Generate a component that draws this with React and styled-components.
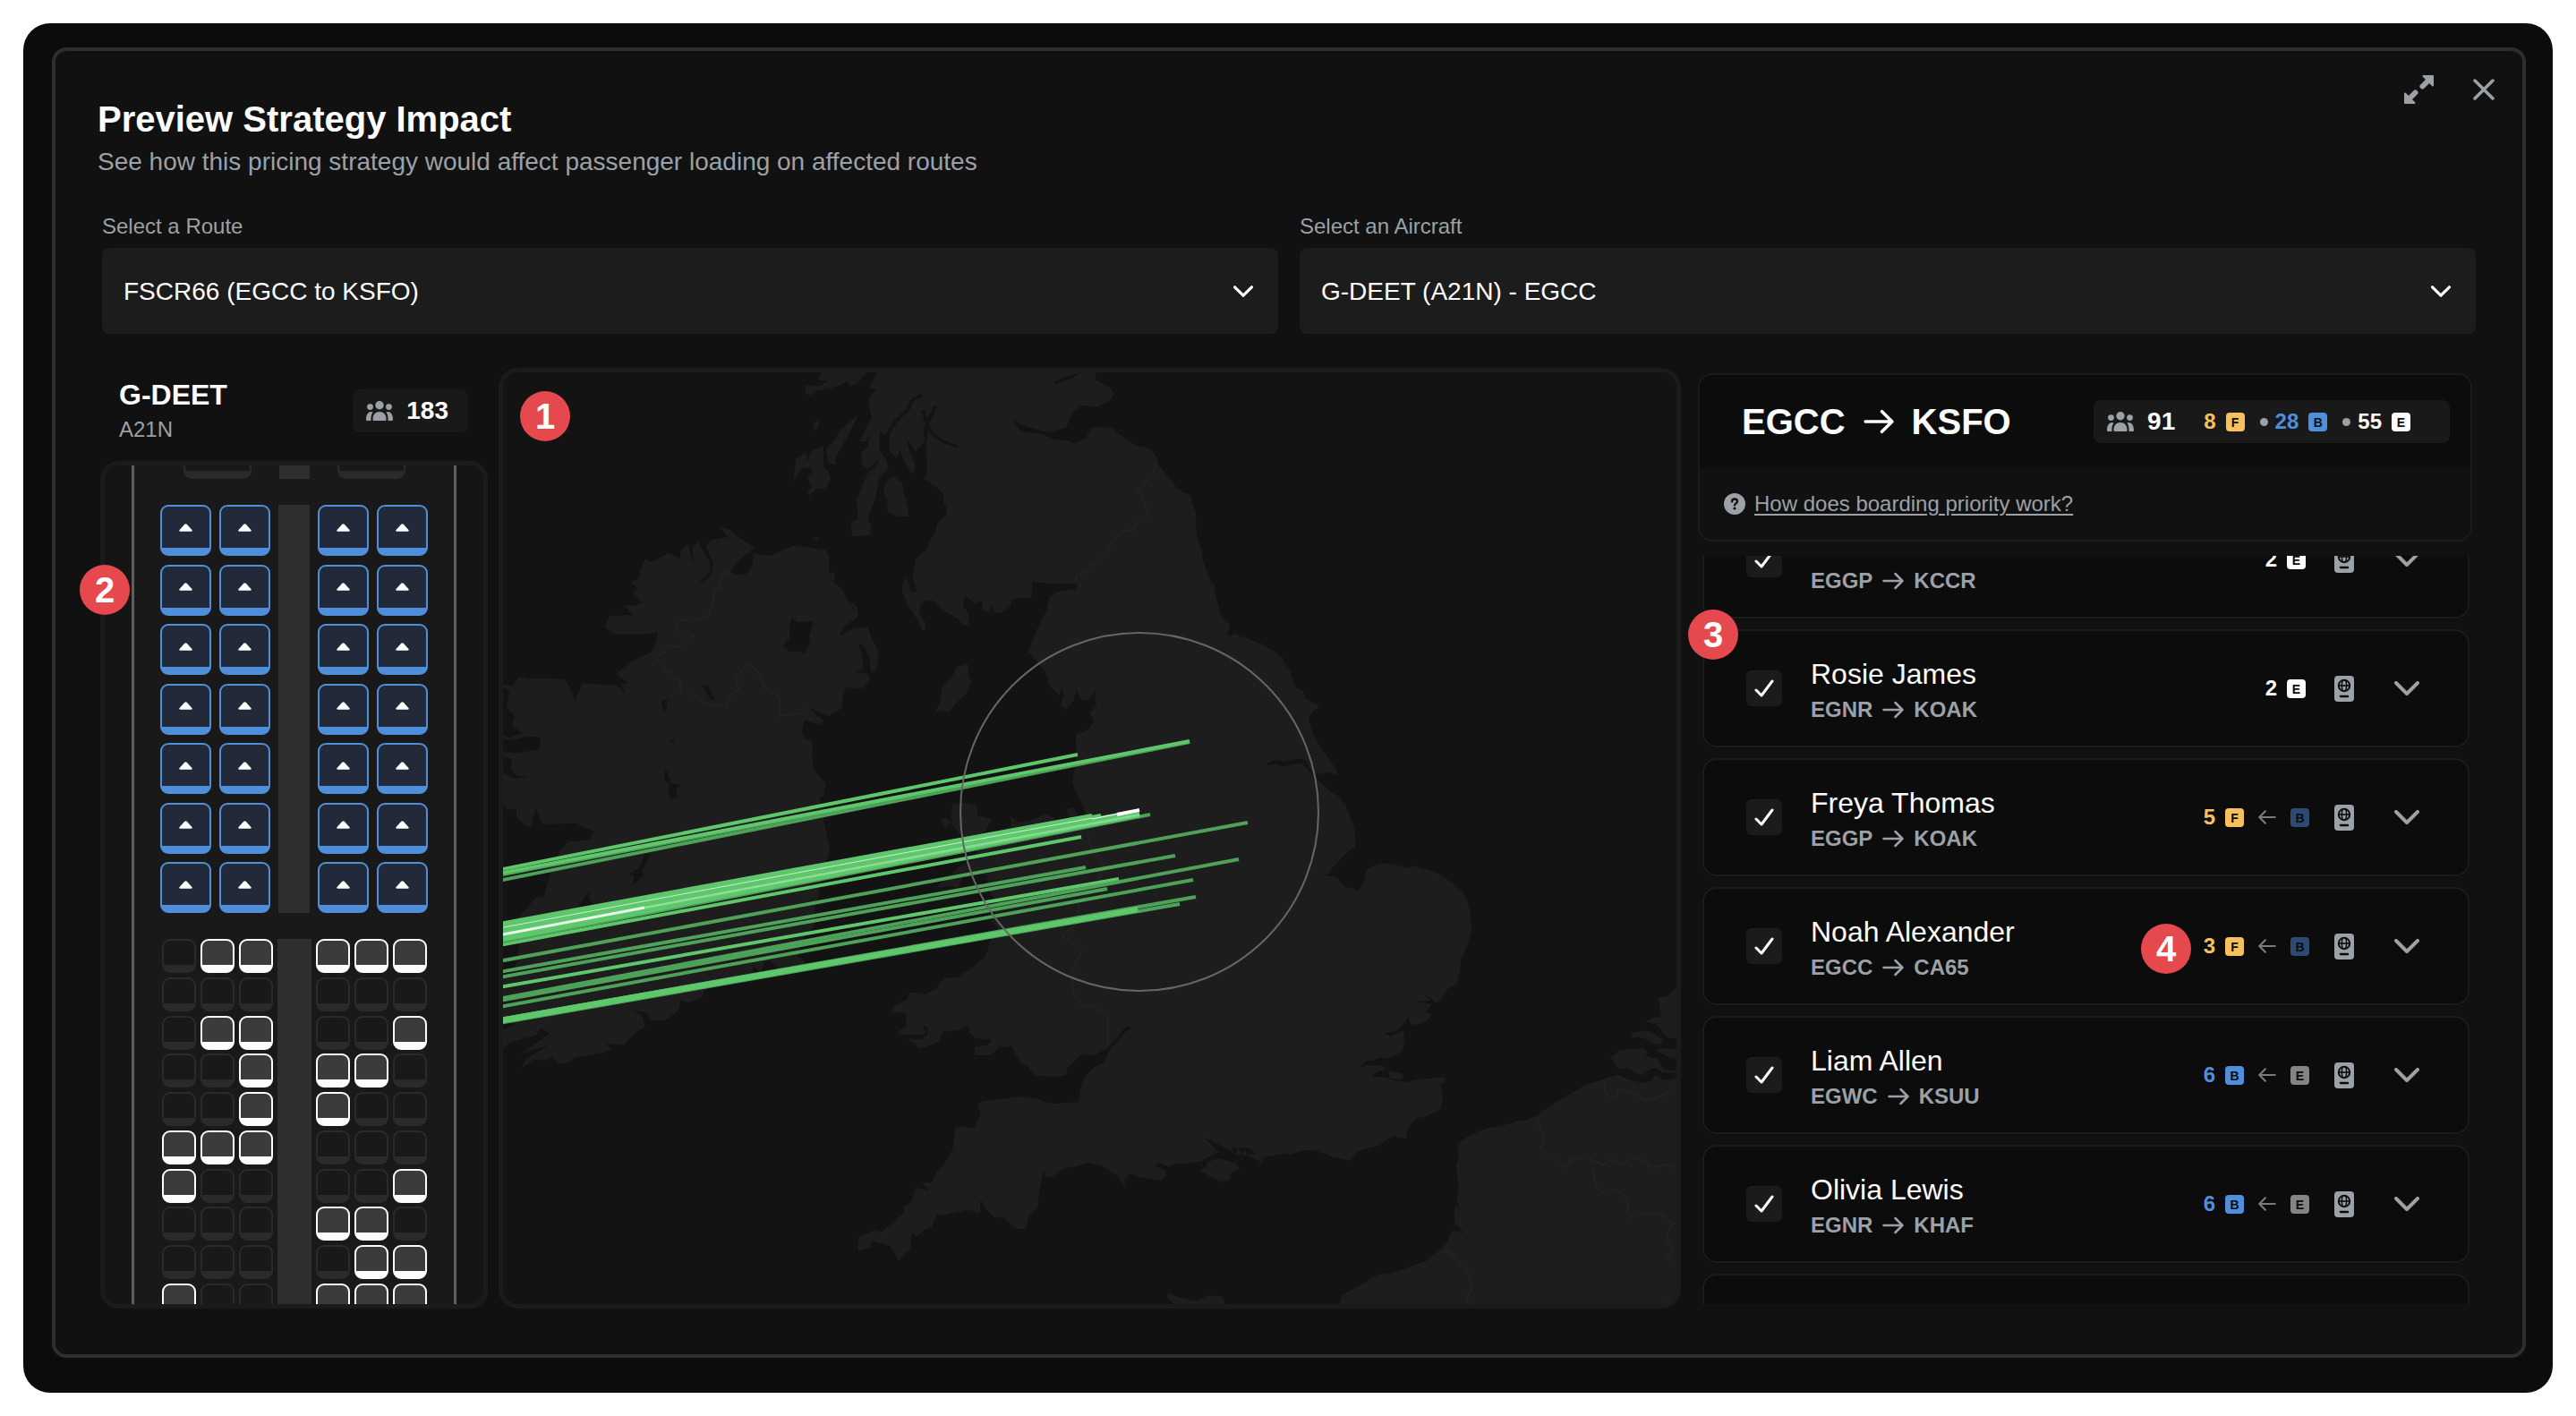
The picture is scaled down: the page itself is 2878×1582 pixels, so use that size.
import React from 'react';
import styled, { createGlobalStyle } from 'styled-components';

const GlobalStyle = createGlobalStyle`
  * {
    box-sizing: border-box;
  }

  body {
    margin: 0;
    background: #ffffff;
    color: #fcfcfc;
    font-family: 'Liberation Sans', Arial, sans-serif;
  }
`;

const Shell = styled.div`
  display: flex;
  height: calc(100vh - 52px);
  min-height: 900px;
  margin: 26px;
  padding: 27px 30px 39px 32px;
  border-radius: 30px;
  background: #0c0c0c;
`;

const Dialog = styled.main`
  display: flex;
  flex: 1;
  flex-direction: column;
  min-width: 0;
  padding-bottom: 51px;
  border: 4px solid #2e2e2e;
  border-radius: 16px;
  background: #111111;
`;

const DialogHeader = styled.header`
  display: flex;
  justify-content: space-between;
  align-items: flex-start;
`;

const Heading = styled.div`
  display: flex;
  flex-direction: column;
  gap: 8px;
  padding: 52px 0 0 47px;
`;

const Title = styled.h1`
  margin: 0;
  font-size: 40px;
  line-height: 48px;
`;

const Subtitle = styled.p`
  margin: 0;
  color: #9ba1a6;
  font-size: 28px;
  line-height: 32px;
`;

const Actions = styled.div`
  display: flex;
  align-items: center;
  gap: 44px;
  padding: 27px 31px 0 0;
`;

const IconButton = styled.button`
  display: flex;
  padding: 0;
  border: 0;
  background: none;
  color: #9ba1a6;
  cursor: pointer;
`;

const Fields = styled.div`
  display: grid;
  grid-template-columns: 1fr 1fr;
  gap: 24px;
  padding: 42px 52px 38px;
`;

const Field = styled.div`
  display: flex;
  flex-direction: column;
  gap: 10px;
`;

const FieldLabel = styled.label`
  color: #9ba1a6;
  font-size: 24px;
  line-height: 28px;
`;

const SelectBox = styled.div`
  display: grid;
  align-items: center;

  > * {
    grid-area: 1 / 1;
  }

  svg {
    justify-self: end;
    margin-right: 28px;
    pointer-events: none;
  }
`;

const Select = styled.select`
  width: 100%;
  height: 96px;
  padding: 0 24px;
  border: 0;
  border-radius: 8px;
  appearance: none;
  background: #1c1c1c;
  color: #fcfcfc;
  font-family: inherit;
  font-size: 28px;
`;

const Workspace = styled.div`
  display: grid;
  flex: 1;
  grid-template-columns: 433px 1fr 872px;
  grid-template-rows: minmax(0, 1fr);
  gap: 12px;
  min-height: 0;
  padding: 0 56px 0 50px;
`;

const Marker = styled.span`
  position: absolute;
  top: ${(props) => props.$top};
  left: ${(props) => props.$left};
  width: 56px;
  height: 56px;
  border-radius: 50%;
  background: #e5484d;
  color: #ffffff;
  font-size: 40px;
  font-weight: bold;
  line-height: 56px;
  text-align: center;
  z-index: 1;
`;

/* aircraft column */

const Column = styled.section`
  position: relative;
  display: flex;
  flex-direction: column;
  min-width: 0;
  min-height: 0;
`;

const AircraftHeader = styled.div`
  display: flex;
  align-items: center;
  justify-content: space-between;
  padding: 12px 22px 21px 21px;
`;

const AircraftName = styled.h2`
  margin: 0 0 7px;
  font-size: 32px;
  line-height: 36px;
`;

const AircraftType = styled.div`
  color: #9ba1a6;
  font-size: 24px;
  line-height: 28px;
`;

const Pill = styled.div`
  display: flex;
  align-items: center;
  height: 48px;
  padding: 0 ${(props) => props.$end} 0 15px;
  border-radius: 8px;
  background: #191919;
  font-weight: bold;
`;

const PillCount = styled.span`
  margin: 0 0 0 15px;
  font-size: 28px;
  line-height: 32px;
`;

const Frame = styled.div`
  flex: 1;
  min-height: 0;
  border: 5px solid #1b1b1b;
  border-radius: 20px;
  background: #151515;
  overflow: hidden;
`;

const Fuselage = styled.div`
  display: flex;
  flex-direction: column;
  align-items: center;
  gap: 29px;
  width: 363px;
  height: 100%;
  margin: 0 auto;
  border: solid #5e5e5e;
  border-width: 0 3px;
  background: #191919;
`;

const Cabin = styled.div`
  display: flex;
  flex-shrink: 0;
  gap: ${(props) => props.$gap};
  height: ${(props) => props.$height};

  &:first-child {
    margin-top: -55px;
  }
`;

const Bank = styled.div`
  display: grid;
  grid-template-columns: repeat(${(props) => props.$columns}, ${(props) => props.$seat});
  column-gap: ${(props) => props.$gap};
  align-content: space-between;
`;

const Aisle = styled.div`
  width: ${(props) => props.$width};
  background: #2e2e2e;
`;

const seatColors = {
  business: '#4f8edb',
  taken: '#fcfcfc',
  empty: '#2a2a2a'
};

const seatFills = {
  business: '#222938',
  taken: '#3b3b3b',
  empty: '#191919'
};

const Seat = styled.div`
  display: flex;
  align-items: center;
  justify-content: center;
  height: ${(props) => props.$height};
  border: 2px solid ${(props) => seatColors[props.$kind]};
  border-bottom-width: 9px;
  border-radius: 9px;
  background: ${(props) => seatFills[props.$kind]};
`;

/* map column */

const MapFrame = styled(Frame)`
  border-radius: 22px;
  background: #131313;

  svg {
    display: block;
    width: 100%;
    height: 100%;
  }
`;

/* passenger column */

const PassengerColumn = styled(Column)`
  padding: 6px 0 5px 7px;
`;

const RouteCard = styled.div`
  border: 2px solid #1b1b1b;
  border-radius: 16px;
  overflow: hidden;
`;

const RouteTop = styled.div`
  display: flex;
  align-items: center;
  justify-content: space-between;
  height: 104px;
  padding: 0 23px 0 47px;
  background: #0c0c0c;
`;

const RouteTitle = styled.h2`
  display: flex;
  align-items: center;
  gap: 20px;
  margin: 0;
  font-size: 40px;
  line-height: 40px;
`;

const Help = styled.div`
  display: flex;
  align-items: center;
  gap: 10px;
  height: 80px;
  padding-left: 27px;
`;

const HelpLink = styled.a`
  color: #9ba1a6;
  font-size: 24px;
  text-underline-offset: 3px;
`;

const Tally = styled.span`
  display: flex;
  align-items: center;
  gap: 11px;
  color: ${(props) => props.$color};
  font-size: 24px;
  font-weight: bold;
`;

const Tallies = styled.div`
  display: flex;
  align-items: center;
  margin-left: 32px;
`;

const Dot = styled.i`
  width: 9px;
  height: 9px;
  margin: 0 8px 0 17px;
  border-radius: 50%;
  background: #9ba1a6;
`;

const Badge = styled.span`
  width: 21px;
  height: 21px;
  border-radius: 4px;
  background: ${(props) => props.$color};
  color: #0c0c0c;
  font-size: 14px;
  font-weight: bold;
  line-height: 22px;
  text-align: center;
`;

const ListWrap = styled.div`
  position: relative;
  flex: 1;
  min-height: 0;
  margin-top: 16px;
`;

const List = styled.ul`
  display: flex;
  flex-direction: column;
  gap: 12px;
  height: 100%;
  margin: 0;
  padding: 0 3px 0 5px;
  list-style: none;
  overflow: hidden;

  li:first-child {
    margin-top: -62px;
  }
`;

const Row = styled.li`
  position: relative;
  display: flex;
  flex-shrink: 0;
  align-items: center;
  height: 132px;
  padding: 0 54px 0 47px;
  border: 2px solid #1b1b1b;
  border-radius: 16px;
  background: #0c0c0c;
`;

const CheckBox = styled.span`
  display: grid;
  place-items: center;

  > * {
    grid-area: 1 / 1;
  }

  input {
    width: 40px;
    height: 40px;
    margin: 0;
    border-radius: 6px;
    appearance: none;
    background: #1b1b1b;
  }

  svg {
    pointer-events: none;
  }
`;

const Person = styled.div`
  flex: 1;
  padding: 4px 0 0 32px;
`;

const Name = styled.label`
  display: block;
  height: 36px;
  margin-bottom: 8px;
  font-size: 32px;
  line-height: 36px;
`;

const Leg = styled.div`
  display: flex;
  align-items: center;
  gap: 11px;
  color: #9ba1a6;
  font-size: 24px;
  font-weight: bold;
  line-height: 28px;
`;

const Change = styled.div`
  display: flex;
  align-items: center;
  gap: 16px;
  margin-right: ${(props) => (props.$upgraded ? '28px' : '32px')};
`;

const Expand = styled(IconButton)`
  margin-left: 45px;
`;

const cabinColors = { F: '#f6c15c', B: '#4f8edb', E: '#fcfcfc' };
const dimColors = { B: '#2c4a72', E: '#848484' };

const PeopleIcon = () => (
  <svg width="30" height="22" viewBox="0 0 30 22" fill="#9ba1a6">
    <circle cx="15" cy="4.7" r="4.7" />
    <circle cx="4.5" cy="6.6" r="3.4" />
    <circle cx="25.5" cy="6.6" r="3.4" />
    <path d="M7.5 20.5c0-5.500 3-8.500 7.500-8.500s7.500 3 7.500 8.500q0 1.500-1.500 1.500H9q-1.500 0-1.500-1.500z" />
    <path d="M7.600 12.600C6.200 14.500 5.400 17 5.400 20.500V22H1.200Q0 22 0 20.800C0 15.500 2.200 12 5.500 12q1.200 0 2.100.6z" />
    <path d="M22.400 12.600c1.400 1.900 2.200 4.400 2.200 7.900V22h4.200q1.200 0 1.200-1.200c0-5.300-2.200-8.800-5.500-8.800q-1.200 0-2.100.6z" />
  </svg>
);

const Chevron = ({ width = 28, height = 16, color = '#9ba1a6' }) => (
  <svg width={width} height={height} viewBox="0 0 28 16" fill="none" stroke={color} strokeWidth="4" strokeLinecap="round" strokeLinejoin="round">
    <path d="M2 2l12 12L26 2" />
  </svg>
);

const Arrow = ({ size, color = 'currentColor', flip }) => (
  <svg width={size} height={size} viewBox="0 0 24 24" fill="none" stroke={color} strokeWidth="2.5" strokeLinecap="round" strokeLinejoin="round">
    <path d={flip ? 'M22.500 12H1.500M9.500 4l-8 8 8 8' : 'M1.500 12h21M14.500 4l8 8-8 8'} />
  </svg>
);

const PassportIcon = () => (
  <svg width="22" height="29" viewBox="0 0 22 29">
    <rect width="22" height="29" rx="4" fill="#9ba1a6" />
    <g fill="none" stroke="#0c0c0c" strokeWidth="2">
      <circle cx="11" cy="11" r="6.200" />
      <ellipse cx="11" cy="11" rx="2.600" ry="6.200" strokeWidth="1.500" />
      <path d="M4.700 11h12.600" strokeWidth="1.700" />
      <path d="M7 23h8" strokeWidth="2.500" strokeLinecap="round" />
    </g>
  </svg>
);

const SeatArrow = () => (
  <svg width="15" height="9" viewBox="0 0 15 9" fill="#ffffff">
    <path d="M1 8.800Q-.4 8 .8 6.800L6 1Q7.500-.5 9 1l5.200 5.800Q15.400 8 14 8.800z" />
  </svg>
);

// Each tile keeps its coastline in its own grid and is placed by its transform
const tiles = [
  {
    id: 'nw',
    transform: 'translate(550 400) scale(0.44643 0.35077)',
    land: [
      'M965 40L945 95L960 100L940 130L945 165L950 190L935 225L920 265L935 265L945 240L940 280L922 305L925 340L940 355L968 318L960 350L940 365L925 410L912 450L915 515L898 520L900 568L945 565L950 535L938 515L955 460L965 410L970 380L992 350L985 320L968 290L970 235L985 245L990 290L1010 320L1020 295L1035 340L1052 372L1060 345L1045 300L1035 250L1060 300L1072 280L1085 260L1088 370L1078 382L1120 420L1130 435L1128 455L1138 480L1135 500L1112 530L1110 555L1095 580L1090 605L1060 640L1052 690L1062 745L1048 745L1038 705L1030 700L1025 740L1040 790L1068 840L1075 868L1085 868L1082 840L1068 810L1072 785L1088 770L1105 775L1130 805L1165 830L1178 850L1192 850L1192 815L1178 790L1182 755L1195 770L1210 785L1225 770L1228 805L1245 808L1250 790L1258 812L1275 812L1297 790L1300 770L1320 765L1350 765L1352 712L1380 717L1440 720L1465 717L1460 735L1415 745L1395 760L1385 810L1365 860L1352 900L1342 935L1385 1000L1395 1045L1420 1075L1425 1045L1430 1075L1422 1105L1437 1120L1455 1090L1462 1060L1475 1090L1490 1090L1510 1055L1508 1090L1513 1105L1495 1130L1505 1155L1495 1180L1460 1200L1462 1270L1452 1355L1480 1430L1570 1430L1570 245L1550 220L1500 222L1485 255L1458 272L1440 262L1410 260L1370 240L1325 235L1300 195L1330 215L1385 235L1405 235L1437 220L1450 175L1478 150L1510 157L1540 140L1557 115L1545 95L1510 70L1510 40Z',
      'M26 1040L50 1045L65 1015L90 1022L140 1020L180 1025L195 1050L207 1095L225 1035L270 1040L310 1040L335 1070L322 1040L340 1035L310 1005L350 965L400 935L410 900L415 872L385 880L340 880L305 880L280 855L295 820L350 818L330 785L355 790L375 780L350 750L365 735L345 712L365 705L370 680L382 640L400 650L440 620L470 640L472 610L490 595L505 660L500 605L515 585L530 620L545 650L545 680L508 730L550 690L552 650L535 600L545 580L590 570L568 535L600 550L620 575L658 603L630 630L595 680L610 690L635 690L650 660L655 622L695 630L730 610L755 598L775 600L800 605L835 612L843 635L842 680L858 685L855 715L875 735L890 775L908 810L895 775L912 790L915 825L880 855L870 885L905 860L940 858L950 895L967 935L965 975L955 1005L945 995L945 960L935 925L915 903L927 950L927 990L912 1003L940 1005L945 1025L925 1052L885 1050L878 1075L875 1115L842 1142L820 1130L790 1112L805 1130L830 1155L820 1168L780 1152L775 1190L785 1215L800 1220L802 1305L835 1355L830 1395L818 1400L830 1430L26 1430Z',
      'M1190 975L1192 1010L1198 1030L1185 1070L1160 1100L1145 1125L1120 1125L1105 1132L1120 1100L1125 1050L1150 1020L1160 985Z',
      'M1003 378L1025 395L1032 440L1040 470L1042 505L1010 505L990 490L988 455L978 425L985 395Z',
      'M785 300L760 320L752 395L775 350L798 350L800 375L788 375L800 415L788 425L795 440L810 418L835 415L847 385L842 365L830 345L828 278L800 295L788 330Z',
      'M915 180L870 230L855 262L835 290L842 335L858 340L862 310L880 270L900 225Z',
      'M820 192L805 205L803 230L815 225Z',
      'M825 40L815 70L840 72L820 90L782 88L785 115L800 118L805 105L850 95L890 75L895 90L915 80L940 40Z',
      'M800 570L818 572L815 582Z',
      'M1150 1432L1158 1418L1190 1416L1208 1432Z'
    ],
    water: [
      'M750 825L765 842L803 838L793 890L795 910L780 942L765 932L745 937L727 915L745 890L743 860Z',
      'M522 1040L540 1045L557 1090L545 1085Z',
      'M422 1090L438 1090L437 1110L430 1135Z',
      'M432 1305L443 1335L445 1355L473 1358L460 1375L462 1400L445 1402L440 1380L443 1360L430 1345Z',
      'M442 1213L455 1220L455 1232Z',
      'M26 1215L60 1215L85 1205L120 1207L118 1248L60 1257L26 1255Z',
      'M26 1270L48 1275L48 1310L60 1330L92 1337L50 1338L26 1320Z',
      'M26 1050L45 1060L35 1110L55 1140L50 1170L75 1195L40 1210L26 1200Z',
      'M1405 76L1440 58L1475 46L1445 68L1410 82Z'
    ],
    lochs: [
      'M1075 118L1050 135L1040 165L1010 200L990 240L990 290',
      'M1078 165L1090 220L1105 245L1125 265L1165 282',
      'M1110 152L1085 220L1085 260'
    ],
    borders: [
      'M1460 712L1462 688L1480 685L1510 650L1535 625L1550 590L1568 560',
      'M595 680L575 690L567 735L557 740L552 780L540 825L490 840L475 832L460 850L470 872L505 885L475 920L440 918L430 940L408 955L440 1000L470 1030L472 1068L500 1072L535 1105L585 1108L600 1070L617 1055L608 1020L640 972L665 1000L685 1055L718 1080L720 1140L775 1130L790 1112'
    ]
  },
  {
    id: 'ne',
    transform: 'translate(1250 400) scale(0.42092 0.35077)',
    land: [
      'M-2 245L5 245L20 260L45 278L82 288L100 315L108 345L140 390L155 417L165 418L168 428L180 430L193 440L195 465L205 490L205 540L210 580L220 610L222 640L232 675L245 712L253 722L258 760L270 815L280 838L295 845L292 865L287 878L298 886L305 875L320 885L345 895L380 910L410 932L435 955L437 970L452 990L462 1025L470 1050L490 1063L495 1085L520 1100L534 1110L515 1125L503 1150L518 1205L550 1265L575 1305L582 1330L558 1317L540 1325L520 1325L512 1320L500 1285L485 1275L435 1285L415 1280L393 1293L400 1298L415 1290L435 1303L455 1295L487 1290L500 1310L515 1332L530 1345L560 1380L588 1398L590 1410L602 1430L-2 1430Z'
    ],
    borders: ['M0 560L15 548L35 550L45 525L72 510L78 492L68 465L62 440L45 415L60 412L92 365L100 340']
  },
  {
    id: 'sw',
    transform: 'translate(550 900) scale(0.44643 0.38265)',
    land: [
      'M26 -4L828 -4L830 45L845 130L835 165L822 230L808 300L805 355L780 385L765 440L790 465L760 485L720 480L695 455L683 455L670 490L650 460L655 490L600 500L530 540L525 560L490 575L472 568L465 600L435 625L395 630L390 605L355 598L375 615L382 645L350 670L330 700L285 695L300 715L265 725L240 730L205 735L190 752L165 755L150 735L130 745L105 740L70 770L85 740L140 700L70 725L145 665L120 650L110 670L50 690L26 708L26 655L60 640L26 630Z',
      'M1150 -4L1210 -4L1215 30L1250 40L1235 75L1200 90L1175 90L1155 60L1145 50L1135 65L1122 40L1135 35L1150 50Z',
      'M1570 -4L1478 -4L1485 30L1470 40L1455 5L1435 10L1450 55L1405 55L1410 40L1385 25L1350 42L1320 50L1295 30L1300 60L1265 75L1230 95L1200 160L1165 180L1110 240L1145 235L1165 240L1180 200L1215 195L1240 205L1240 240L1265 290L1250 340L1265 355L1245 400L1235 440L1200 475L1165 500L1130 505L1110 535L1085 550L1045 545L1040 565L1005 585L998 605L1035 605L1037 645L1015 660L1025 670L1085 668L1078 640L1090 650L1088 670L1070 682L1030 683L1050 690L1070 710L1115 690L1130 660L1170 655L1190 640L1195 665L1210 680L1250 683L1240 700L1208 705L1207 730L1250 728L1270 705L1300 703L1320 750L1340 762L1358 787L1410 793L1437 785L1440 765L1475 728L1505 730L1540 708L1570 672Z',
      'M1570 683L1545 715L1530 750L1510 760L1480 795L1472 830L1468 865L1410 870L1385 865L1360 855L1315 850L1285 855L1230 863L1215 870L1222 905L1205 940L1160 937L1152 1005L1130 1050L1112 1070L1100 1100L1075 1102L1095 1125L1060 1115L1050 1155L1030 1170L1028 1190L975 1245L955 1240L917 1260L915 1300L945 1292L950 1270L995 1285L1018 1330L1030 1308L1045 1300L1050 1245L1060 1260L1080 1240L1100 1230L1112 1192L1130 1197L1190 1180L1220 1190L1222 1150L1232 1175L1258 1205L1275 1200L1310 1235L1335 1237L1340 1205L1365 1175L1370 1120L1380 1065L1385 1083L1400 1085L1425 1062L1465 1052L1495 1043L1530 1055L1570 1088Z'
    ],
    water: [
      'M26 -4L40 12L60 10L60 35L95 65L110 5L125 55L210 52L255 75L245 100L190 105L170 130L150 180L135 240L130 265L108 270L65 330L65 450L50 480L26 500Z',
      'M380 140L395 142L375 190L378 205L350 235L355 205L342 200L370 180Z',
      'M240 255L248 290L262 297L215 295Z'
    ],
    borders: [
      'M1490 80L1500 130L1530 170L1515 230L1465 290L1470 340L1425 380L1475 420L1450 490L1455 550L1480 590L1505 585L1540 620L1540 700'
    ]
  },
  {
    id: 'se',
    transform: 'translate(1250 900) scale(0.42092 0.38265)',
    land: [
      'M-2 -4L600 -4L615 35L628 80L627 120L608 135L582 162L552 205L575 208L590 222L602 240L620 240L635 252L650 222L658 187L675 175L705 168L735 174L765 183L778 176L835 192L860 206L912 250L923 275L933 315L937 365L925 405L908 450L906 480L897 523L872 535L868 545L845 577L822 560L805 545L828 570L785 573L832 580L815 603L833 610L815 630L785 642L773 635L767 618L760 635L745 650L735 660L706 663L720 675L740 662L755 658L758 680L755 710L740 727L720 737L690 737L675 745L655 747L637 767L665 757L700 760L710 770L690 775L673 785L680 792L710 793L720 800L760 808L790 800L865 793L866 805L853 815L860 850L855 885L840 895L810 910L790 913L765 945L763 973L727 965L690 993L635 1008L612 1037L570 1027L520 1007L490 1006L460 1017L425 1018L385 1028L380 1043L345 1022L310 1018L265 990L228 970L265 1012L240 1025L215 1040L150 1047L130 1055L108 1043L97 1053L125 1065L125 1085L110 1095L50 1083L30 1075L15 1090L18 1115L0 1090L-2 1088Z',
      'M265 1030L310 1045L320 1058L298 1075L293 1093L270 1099L235 1078L213 1064L230 1055L235 1040Z',
      'M715 773L750 782L757 795L745 800L720 798Z',
      'M585 1462L592 1430L635 1405L690 1368L720 1367L815 1330L855 1295L872 1275L885 1240L915 1248L890 1215L893 1165L903 1178L897 1145L903 1112L898 1080L895 1050L903 1020L898 990L930 963L975 942L1020 935L1060 920L1075 922L1110 905L1150 873L1235 817L1325 785L1350 800L1390 810L1410 805L1425 787L1450 803L1486 795L1486 1462Z',
      'M1305 735L1330 713L1395 708L1402 720L1398 730L1430 740L1445 770L1486 775L1486 782L1440 778L1425 767L1412 768L1390 788L1370 780L1355 767L1325 768Z',
      'M1360 665L1390 657L1415 660L1445 685L1440 695L1420 698L1400 683L1378 675L1360 678Z',
      'M1398 632L1415 620L1440 617L1435 580L1430 560L1455 557L1486 522L1486 680L1455 678L1435 650L1422 635Z',
      'M1425 715L1440 708L1486 712L1486 740L1460 735Z',
      'M130 1422L155 1435L205 1447L235 1430L275 1433L284 1462L150 1462L130 1438Z'
    ],
    water: [
      'M-2 675L15 650L28 642L32 652L18 660L-2 683Z',
      'M300 1000L315 998L312 1018L302 1010Z',
      'M318 1000L345 998L365 1018L340 1020L335 1005L325 1022Z'
    ],
    borders: [
      'M1110 908L1118 940L1127 970L1120 1000L1130 1015L1150 1020L1160 1040L1188 1057L1195 1038L1240 1022L1262 1050L1260 1080L1270 1120L1290 1135L1315 1120L1340 1135L1352 1155L1350 1190L1362 1203L1370 1187L1400 1195L1430 1187L1472 1222L1458 1240L1455 1268L1475 1295L1455 1315L1478 1338',
      'M1250 1030L1285 1048L1310 1033L1340 1047L1360 1025L1400 1040L1415 1058L1460 1047L1478 1058',
      'M1287 800L1290 835L1305 850L1320 850L1325 828L1380 842L1385 857L1400 863L1445 845L1475 815',
      'M865 1292L925 1358L938 1410L922 1440L930 1458'
    ]
  }
];

const bright = '#5fc76b';
const muted = '#4da159';

// [y where the line leaves the map, end x, end y, colour]
const flights = [
  [983, 1329, 829, muted],
  [977, 1300, 834, muted],
  [975, 1329, 828, bright],
  [971, 1204, 843, bright],
  [1055, 1208, 935, bright],
  [1052, 1285, 910, muted],
  [1050, 1273, 911, bright],
  [1047, 1273, 910, bright],
  [1043, 1273, 910, '#74d585'],
  [1040, 1273, 909, bright],
  [1037, 1250, 910, bright],
  [1034, 1230, 911, bright],
  [1031, 1220, 911, bright],
  [1073, 1394, 919, muted],
  [1085, 1213, 969, muted],
  [1091, 1313, 956, muted],
  [1102, 1250, 982, bright],
  [1115, 1384, 960, muted],
  [1117, 1237, 993, muted],
  [1124, 1333, 983, muted],
  [1138, 1336, 1002, muted],
  [1142, 1318, 1010, muted],
  [1138, 1271, 1015, bright],
  [1141, 1271, 1017, bright]
];

const FlightMap = () => (
  <svg viewBox="562 416 1311 1041" preserveAspectRatio="xMidYMid slice" role="img" aria-label="Passenger routes">
    {tiles.map((tile) => (
      <g key={tile.id} transform={tile.transform}>
        <path d={tile.land.join('')} fill="#1d1d1d" />
        <path d={(tile.water || []).join('')} fill="#131313" />
        <path d={(tile.lochs || []).join('')} fill="none" stroke="#131313" strokeWidth="9" />
        <path d={tile.borders.join('')} fill="none" stroke="#232323" strokeWidth="4" />
      </g>
    ))}
    {flights.map(([from, x, y, color]) => (
      <line key={`${from}-${x}`} x1="552" y1={from + 2} x2={x} y2={y} stroke={color} strokeWidth="4" />
    ))}
    <line x1="552" y1="1038" x2="1220" y2="914" stroke="#ffffff" strokeWidth="1" opacity="0.7" />
    <line x1="552" y1="1046" x2="720" y2="1014" stroke="#ffffff" strokeWidth="3" opacity="0.85" />
    <line x1="720" y1="1014" x2="1273" y2="910" stroke="#a5e8b0" strokeWidth="2" opacity="0.6" />
    <line x1="1220" y1="915" x2="1250" y2="909" stroke="#ffffff" strokeWidth="1" />
    <line x1="1248" y1="910" x2="1273" y2="905" stroke="#ffffff" strokeWidth="4" />
    <circle cx="1273" cy="907" r="200" fill="none" stroke="#666666" strokeWidth="2" />
  </svg>
);

const economyRows = [
  '011111',
  '000000',
  '011001',
  '001110',
  '001100',
  '111000',
  '100001',
  '000110',
  '000011',
  '100111'
];

const EconomyBank = ({ from }) => (
  <Bank $columns={3} $seat="38px" $gap="5px">
    {economyRows.map((row, i) =>
      row
        .slice(from, from + 3)
        .split('')
        .map((seat, j) => <Seat key={`${i}-${j}`} $height="38px" $kind={seat === '1' ? 'taken' : 'empty'} />)
    )}
  </Bank>
);

const BusinessBank = () => (
  <Bank $columns={2} $seat="57px" $gap="9px">
    {Array.from({ length: 14 }, (_, i) => (
      <Seat key={i} $height="57px" $kind="business">
        <SeatArrow />
      </Seat>
    ))}
  </Bank>
);

const SeatMap = () => (
  <Frame>
    <Fuselage>
      <Cabin $gap="31px" $height="70px">
        <Bank $columns={1} $seat="76px" $gap="0">
          <Seat $height="70px" $kind="empty" />
        </Bank>
        <Aisle $width="34px" />
        <Bank $columns={1} $seat="76px" $gap="0">
          <Seat $height="70px" $kind="empty" />
        </Bank>
      </Cabin>
      <Cabin $gap="9px" $height="456px">
        <BusinessBank />
        <Aisle $width="35px" />
        <BusinessBank />
      </Cabin>
      <Cabin $gap="5px" $height="423px">
        <EconomyBank from={0} />
        <Aisle $width="38px" />
        <EconomyBank from={3} />
      </Cabin>
    </Fuselage>
  </Frame>
);

const passengers = [
  { id: 'p1', name: '', from: 'EGGP', to: 'KCCR', seats: 2, cabin: 'E' },
  { id: 'p2', name: 'Rosie James', from: 'EGNR', to: 'KOAK', seats: 2, cabin: 'E' },
  { id: 'p3', name: 'Freya Thomas', from: 'EGGP', to: 'KOAK', seats: 5, cabin: 'F', was: 'B' },
  { id: 'p4', name: 'Noah Alexander', from: 'EGCC', to: 'CA65', seats: 3, cabin: 'F', was: 'B', marker: 4 },
  { id: 'p5', name: 'Liam Allen', from: 'EGWC', to: 'KSUU', seats: 6, cabin: 'B', was: 'E' },
  { id: 'p6', name: 'Olivia Lewis', from: 'EGNR', to: 'KHAF', seats: 6, cabin: 'B', was: 'E' }
];

const CabinTally = ({ count, cabin }) => (
  <Tally $color={cabinColors[cabin]}>
    {count}
    <Badge $color={cabinColors[cabin]}>{cabin}</Badge>
  </Tally>
);

const Passenger = ({ id, name, from, to, seats, cabin, was, marker }) => (
  <Row>
    <CheckBox>
      <input type="checkbox" id={id} defaultChecked />
      <svg width="22" height="20" viewBox="0 0 22 20" fill="none" stroke="#ffffff" strokeWidth="3" strokeLinecap="round" strokeLinejoin="round">
        <path d="M2 12l6 6L20 2" />
      </svg>
    </CheckBox>
    <Person>
      <Name htmlFor={id}>{name}</Name>
      <Leg>
        {from}
        <Arrow size={24} />
        {to}
      </Leg>
    </Person>
    {marker && <Marker $top="39px" $left="488px">{marker}</Marker>}
    <Change $upgraded={Boolean(was)}>
      <CabinTally count={seats} cabin={cabin} />
      {was && <Arrow size={20} color="#7b7b7b" flip />}
      {was && <Badge $color={dimColors[was]}>{was}</Badge>}
    </Change>
    <PassportIcon />
    <Expand aria-label="Show details">
      <Chevron />
    </Expand>
  </Row>
);

const App = () => (
  <>
    <GlobalStyle />
    <Shell>
      <Dialog>
        <DialogHeader>
          <Heading>
            <Title>Preview Strategy Impact</Title>
            <Subtitle>See how this pricing strategy would affect passenger loading on affected routes</Subtitle>
          </Heading>
          <Actions>
            <IconButton aria-label="Expand">
              <svg width="33" height="32" viewBox="0 0 33 32" fill="currentColor" stroke="currentColor" strokeLinejoin="round">
                <path d="M21.500 1H32v10.500zM1 20.500V31h10.500z" strokeWidth="2" />
                <path d="M27 6l-6.500 6.500M6 26l6.500-6.500" strokeWidth="6" strokeLinecap="round" />
              </svg>
            </IconButton>
            <IconButton aria-label="Close">
              <svg width="24" height="24" viewBox="0 0 24 24" stroke="currentColor" strokeWidth="3.500" strokeLinecap="round">
                <path d="M2 2l20 20M22 2L2 22" />
              </svg>
            </IconButton>
          </Actions>
        </DialogHeader>
        <Fields>
          <Field>
            <FieldLabel htmlFor="route">Select a Route</FieldLabel>
            <SelectBox>
              <Select id="route">
                <option>FSCR66 (EGCC to KSFO)</option>
              </Select>
              <Chevron width={22} height={13} color="#ffffff" />
            </SelectBox>
          </Field>
          <Field>
            <FieldLabel htmlFor="aircraft">Select an Aircraft</FieldLabel>
            <SelectBox>
              <Select id="aircraft">
                <option>G-DEET (A21N) - EGCC</option>
              </Select>
              <Chevron width={22} height={13} color="#ffffff" />
            </SelectBox>
          </Field>
        </Fields>
        <Workspace>
          <Column>
            <AircraftHeader>
              <div>
                <AircraftName>G-DEET</AircraftName>
                <AircraftType>A21N</AircraftType>
              </div>
              <Pill $end="22px">
                <PeopleIcon />
                <PillCount>183</PillCount>
              </Pill>
            </AircraftHeader>
            <SeatMap />
            <Marker $top="220px" $left="-23px">2</Marker>
          </Column>
          <Column>
            <MapFrame>
              <FlightMap />
            </MapFrame>
            <Marker $top="26px" $left="24px">1</Marker>
          </Column>
          <PassengerColumn>
            <RouteCard>
              <RouteTop>
                <RouteTitle>
                  EGCC
                  <Arrow size={34} />
                  KSFO
                </RouteTitle>
                <Pill $end="44px">
                  <PeopleIcon />
                  <PillCount>91</PillCount>
                  <Tallies>
                    <CabinTally count={8} cabin="F" />
                    <Dot />
                    <CabinTally count={28} cabin="B" />
                    <Dot />
                    <CabinTally count={55} cabin="E" />
                  </Tallies>
                </Pill>
              </RouteTop>
              <Help>
                <svg width="24" height="24" viewBox="0 0 24 24">
                  <circle cx="12" cy="12" r="12" fill="#9ba1a6" />
                  <path d="M9 9.500C9 7.500 10.300 6.500 12 6.500s3 1 3 2.800c0 2.200-3 2.200-3 4.200" fill="none" stroke="#111111" strokeWidth="2.300" strokeLinecap="round" />
                  <circle cx="12" cy="17" r="1.600" fill="#111111" />
                </svg>
                <HelpLink href="#priority">How does boarding priority work?</HelpLink>
              </Help>
            </RouteCard>
            <ListWrap>
              <Marker $top="60px" $left="-11px">3</Marker>
              <List>
                {passengers.map((passenger) => (
                  <Passenger key={passenger.id} {...passenger} />
                ))}
                <Row />
              </List>
            </ListWrap>
          </PassengerColumn>
        </Workspace>
      </Dialog>
    </Shell>
  </>
);

export default App;
